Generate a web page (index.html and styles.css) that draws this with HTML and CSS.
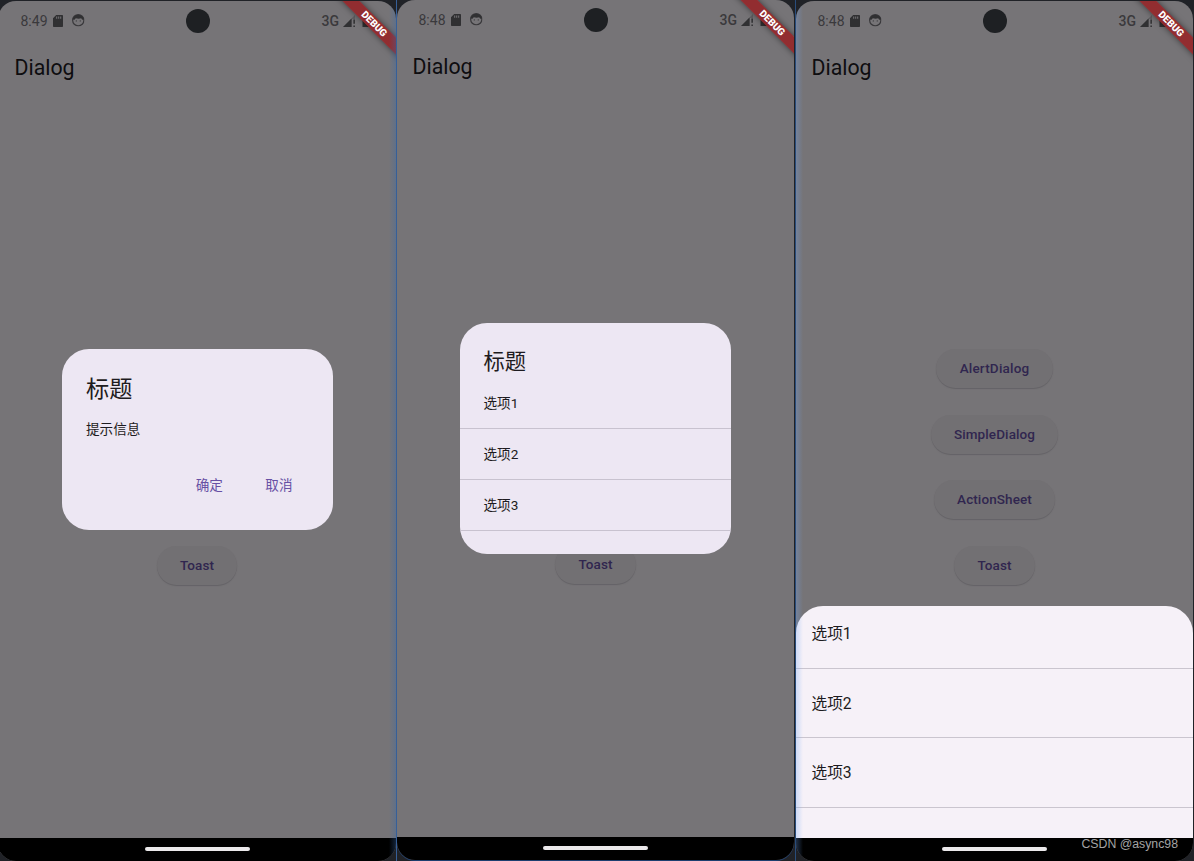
FILE: index.html
```html
<!DOCTYPE html>
<html lang="zh">
<head>
<meta charset="utf-8">
<title>Dialog</title>
<link rel="stylesheet" href="styles.css">
</head>
<body>
<svg class="defs" width="0" height="0">
  <symbol id="sd" viewBox="0 0 10 12"><path fill-rule="evenodd" d="M3.2 0H9.2a.8.8 0 0 1 .8.8v10.4a.8.8 0 0 1-.8.8H.8a.8.8 0 0 1-.8-.8V3.2zM3.2 1.4v2.4h1V1.4zm2 0v2.4h1V1.4zm2 0v2.4h1V1.4z"/></symbol>
  <symbol id="face" viewBox="0 0 12 12"><circle cx="6" cy="6" r="5.4" fill="none" stroke="currentColor" stroke-width="1.2"/><path d="M.6 5.2C1 2.4 3.2.6 6 .6s5 1.8 5.4 4.6L9.8 5.4 8.8 4 6.5 4.6 3.6 4 2.4 5.4z"/><circle cx="4.1" cy="6.6" r=".5"/><circle cx="7.9" cy="6.6" r=".5"/></symbol>
  <symbol id="signal" viewBox="0 0 13 12"><path d="M0 12L12 0v4H9v8z" opacity=".3"/><path d="M0 12L8.5 3.5V12zM10.4 4.5h1.5v4.3h-1.5zM10.4 10.4h1.5V12h-1.5z"/></symbol>
  <symbol id="battery" viewBox="0 0 8 12"><path d="M2.5 0h3v1.2H8V12H0V1.2h2.5z"/></symbol>
</svg>
<main class="stage">
  <section class="phone phone-first">
    <header class="status">
      <span class="time">8:49</span>
      <svg class="sd"><use href="#sd"/></svg>
      <svg class="face"><use href="#face"/></svg>
      <span class="net">3G</span>
      <svg class="signal"><use href="#signal"/></svg>
      <svg class="battery"><use href="#battery"/></svg>
    </header>
    <h1 class="title">Dialog</h1>
    <div class="content"><span class="btn">Toast</span></div>
    <footer class="nav"><i class="handle"></i></footer>
    <div class="camera"></div>
    <div class="banner">DEBUG</div>
    <div class="dialog alert">
      <h2>标题</h2>
      <p>提示信息</p>
      <div class="actions"><span>确定</span><span>取消</span></div>
    </div>
    <div class="glow glow-right"></div>
  </section>
  <section class="phone phone-second">
    <header class="status">
      <span class="time">8:48</span>
      <svg class="sd"><use href="#sd"/></svg>
      <svg class="face"><use href="#face"/></svg>
      <span class="net">3G</span>
      <svg class="signal"><use href="#signal"/></svg>
      <svg class="battery"><use href="#battery"/></svg>
    </header>
    <h1 class="title">Dialog</h1>
    <div class="content"><span class="btn">Toast</span></div>
    <footer class="nav"><i class="handle"></i></footer>
    <div class="camera"></div>
    <div class="banner">DEBUG</div>
    <div class="dialog simple">
      <h2>标题</h2>
      <ul><li>选项1</li><li>选项2</li><li>选项3</li></ul>
    </div>
  </section>
  <section class="phone phone-third">
    <header class="status">
      <span class="time">8:48</span>
      <svg class="sd"><use href="#sd"/></svg>
      <svg class="face"><use href="#face"/></svg>
      <span class="net">3G</span>
      <svg class="signal"><use href="#signal"/></svg>
      <svg class="battery"><use href="#battery"/></svg>
    </header>
    <h1 class="title">Dialog</h1>
    <div class="content">
      <span class="btn btn-alert">AlertDialog</span>
      <span class="btn">SimpleDialog</span>
      <span class="btn">ActionSheet</span>
      <span class="btn">Toast</span>
    </div>
    <footer class="nav"><i class="handle"></i></footer>
    <div class="camera"></div>
    <div class="banner">DEBUG</div>
    <ul class="sheet"><li>选项1</li><li>选项2</li><li>选项3</li></ul>
    <div class="glow glow-left"></div>
  </section>
  <div class="watermark">CSDN @async98</div>
</main>
</body>
</html>
```
FILE: styles.css
```css
* { box-sizing: border-box; }
body {
  margin: 0;
  font-family: Roboto, "Noto Sans CJK SC", sans-serif;
  color: #1d1b20;
  background: #202227;
}
h1, h2, p, ul { margin: 0; padding: 0; font-weight: 400; }
ul { list-style: none; }
.defs { position: absolute; }
.stage {
  position: relative;
  display: flex;
  width: 1194px;
  height: 861px;
  overflow: hidden;
  background: #202227;
}
.phone {
  position: relative;
  flex: none;
  display: flex;
  flex-direction: column;
  width: 397px;
  height: 860px;
  margin-top: 1px;
  border-radius: 18px;
  overflow: hidden;
  background: #767477;
}
.phone-first { width: 398px; margin-left: -2px; }
.phone-second { margin-top: 0; margin-left: 1px; box-shadow: 0 1px 0 #1d3f70; }
.phone-third { margin-left: 2px; }
.stage::before, .stage::after {
  content: "";
  position: absolute;
  top: 0;
  width: 1px;
  height: 861px;
  background: #365f98;
  z-index: 2;
}
.stage::before { left: 396px; }
.stage::after { left: 795px; background: #294d7c; }
.status {
  display: flex;
  align-items: center;
  height: 39px;
  flex: none;
  padding: 0 25px 0 22px;
  color: #3a393c;
  fill: #303032;
}
.phone-first .status { padding-left: 22.5px; }
.phone-third .status, .phone-second .status { padding-left: 21.5px; }
.time { font-size: 14px; width: 27px; }
.sd { width: 10px; height: 12px; margin-left: 5px; }
.face { width: 12.5px; height: 12.5px; margin-left: 9.5px; }
.net { margin-left: auto; font-size: 14px; font-weight: 500; }
.signal { width: 13px; height: 12px; margin-left: 4px; }
.battery { width: 9px; height: 12px; margin-left: 6px; }
.title {
  flex: none;
  height: 54px;
  padding-left: 15.5px;
  font-size: 21.3px;
  line-height: 55px;
  color: #0e0d10;
}
.phone-first .title { padding-left: 16.5px; }
.content {
  flex: 1;
  display: flex;
  flex-direction: column;
  align-items: center;
  justify-content: flex-end;
  gap: 26.6px;
  padding-bottom: 253.3px;
}
.btn {
  height: 39px;
  padding: 0 23.4px;
  border-radius: 20px;
  font-size: 13.5px;
  font-weight: 500;
  line-height: 39px;
  letter-spacing: .1px;
  color: #30264f;
  background: #727073;
  box-shadow: 0 1px 1px #646266;
}
.btn-alert { letter-spacing: .2px; padding: 0 24px; }
.nav {
  display: flex;
  flex: none;
  justify-content: center;
  align-items: center;
  height: 23px;
  padding-bottom: 1px;
  background: #000;
}
.handle { width: 105px; height: 4px; border-radius: 2px; background: #ebe9eb; }
.camera {
  position: absolute;
  top: 8px;
  left: calc(50% - 12px);
  width: 24px;
  height: 24px;
  border-radius: 50%;
  background: #1e2023;
}
.phone-first .camera { left: 187.5px; }
.banner {
  position: absolute;
  top: 16.5px;
  right: -27.5px;
  width: 100px;
  height: 12px;
  transform: rotate(45deg);
  font-size: 9.9px;
  font-weight: 900;
  line-height: 12px;
  text-align: center;
  color: #fff;
  background: rgba(148, 40, 44, .94);
  box-shadow: 0 0 6px rgba(0, 0, 0, .5);
}
.dialog {
  position: absolute;
  left: 63px;
  width: 270.5px;
  border-radius: 27px;
  background: #ede7f3;
  overflow: hidden;
}
.alert { top: 348px; height: 181px; padding: 23.5px 23px 0 24px; left: 64px; }
.alert h2 { font-size: 23.2px; line-height: 32px; }
.alert p { margin-top: 14.5px; font-size: 13.6px; line-height: 20px; }
.actions {
  display: flex;
  justify-content: flex-end;
  gap: 42.5px;
  margin-top: 36px;
  padding-right: 17px;
  font-size: 13.6px;
  line-height: 20px;
  color: #6750a4;
}
.simple { top: 323px; height: 231px; padding-top: 23px; }
.simple h2 { padding-left: 23.5px; font-size: 21.3px; line-height: 31px; }
.simple ul { padding-top: 1px; }
.simple li {
  height: 51px;
  padding-left: 23.5px;
  font-size: 13.6px;
  line-height: 50px;
  border-bottom: 1px solid #c8c2cf;
}
.sheet {
  position: absolute;
  top: 605px;
  left: 0;
  width: 100%;
  height: 232px;
  border-radius: 27px 27px 0 0;
  background: #f6f1f8;
  overflow: hidden;
}
.sheet li {
  height: 69.5px;
  padding-left: 15.5px;
  font-size: 15.7px;
  line-height: 69px;
  border-bottom: 1px solid #cac5cf;
}
.sheet li:first-child { height: 62.5px; line-height: 55px; }
.glow { position: absolute; top: 0; width: 7px; height: 100%; }
.glow-right { right: 0; background: linear-gradient(to left, rgba(55, 105, 170, .35), transparent); }
.glow-left { left: 0; background: linear-gradient(to right, rgba(110, 165, 245, .3), transparent); }
.watermark {
  position: absolute;
  right: 16px;
  bottom: 9px;
  font-family: "Liberation Sans", sans-serif;
  font-size: 12.3px;
  line-height: 16px;
  color: #a4a4a4;
}
```
